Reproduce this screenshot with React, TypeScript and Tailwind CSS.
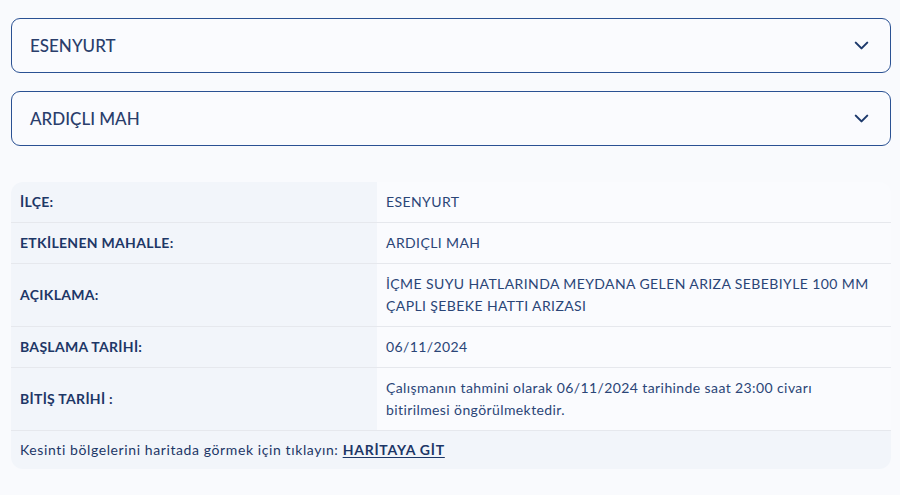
import { ChevronDown } from 'lucide-react'

const rows: { label: string; value: React.ReactNode }[] = [
  { label: 'İLÇE:', value: 'ESENYURT' },
  { label: 'ETKİLENEN MAHALLE:', value: 'ARDIÇLI MAH' },
  {
    label: 'AÇIKLAMA:',
    value: (
      <>
        İÇME SUYU HATLARINDA MEYDANA GELEN ARIZA SEBEBIYLE 100 MM
        <br />
        ÇAPLI ŞEBEKE HATTI ARIZASI
      </>
    ),
  },
  { label: 'BAŞLAMA TARİHİ:', value: '06/11/2024' },
  {
    label: 'BİTİŞ TARİHİ :',
    value: (
      <>
        Çalışmanın tahmini olarak 06/11/2024 tarihinde saat 23:00 civarı
        <br />
        bitirilmesi öngörülmektedir.
      </>
    ),
  },
]

function Select({ value }: { value: string }) {
  return (
    <button
      type="button"
      className="flex h-[55px] w-full items-center justify-between rounded-[9px] border border-[#2a5193] bg-[#fafbfe] pl-[18px] pr-[17px] text-left"
    >
      <span className="text-[17px] font-medium text-[#2a3e6c]">{value}</span>
      <ChevronDown size={23} strokeWidth={2.2} className="text-[#1d3a6c]" />
    </button>
  )
}

export default function App() {
  return (
    <div
      className="min-h-screen bg-[#f9fafd] pl-[11px] pr-[9px] pt-[18px]"
      style={{ fontFamily: 'Lato, "Noto Sans", sans-serif' }}
    >
      <div className="flex flex-col gap-[18px]">
        <Select value="ESENYURT" />
        <Select value="ARDIÇLI MAH" />
      </div>

      <div className="mt-[36px] overflow-hidden rounded-xl">
        {rows.map((r) => (
          <div key={r.label} className="flex border-b border-[#e6e8ed]">
            <div className="flex w-[366px] shrink-0 items-center bg-[#f2f5fa] px-[9px] py-[9px] text-[14px] font-bold leading-[22px] tracking-[0.3px] text-[#1d3767]">
              {r.label}
            </div>
            <div className="flex flex-1 items-center bg-[#fafbfe] px-[9px] py-[9px] text-[14px] leading-[22px] tracking-[0.4px] text-[#2a4577]">
              <span>{r.value}</span>
            </div>
          </div>
        ))}
        <div className="bg-[#f2f5fa] px-[9px] pb-[9px] pt-[9px] text-[14px] leading-[20px] tracking-[0.6px] text-[#1d3767]">
          Kesinti bölgelerini haritada görmek için tıklayın:{' '}
          <a href="#" className="font-bold tracking-[0.75px] underline underline-offset-2">
            HARİTAYA GİT
          </a>
        </div>
      </div>
    </div>
  )
}
